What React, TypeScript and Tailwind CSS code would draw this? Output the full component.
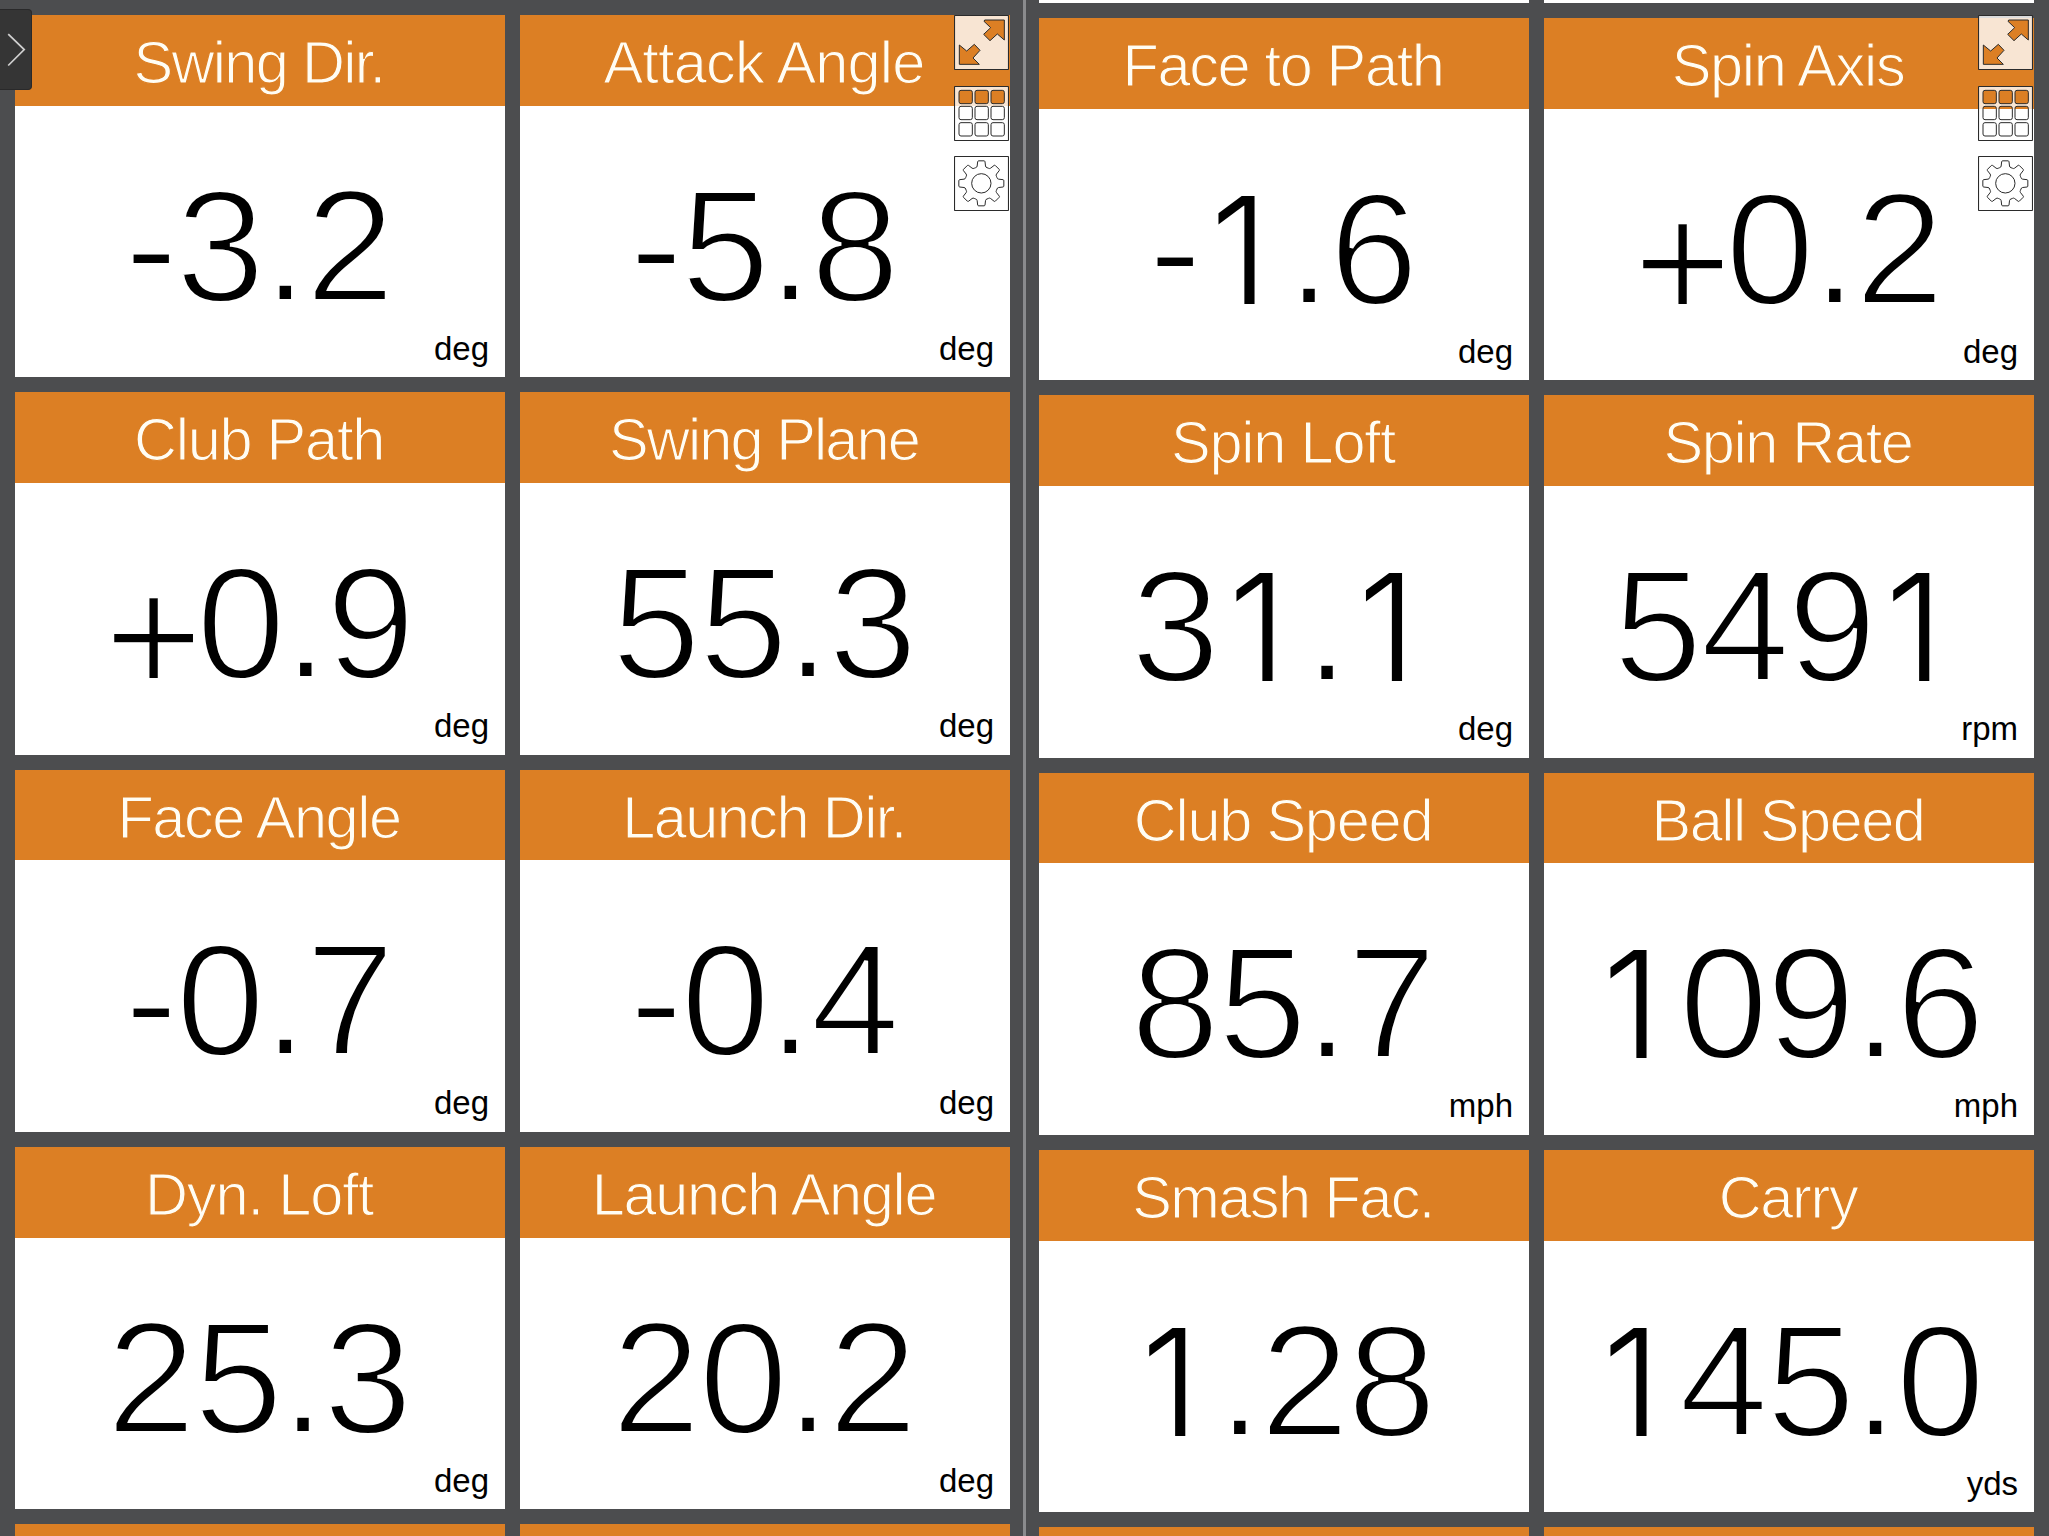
interface Metric {
  title: string;
  value: string;
  unit?: string;
  tracking?: string;
}

const leftMetrics: Metric[] = [
  { title: 'Swing Dir.', value: '-3.2', unit: 'deg', tracking: 'tracking-[-1.7px]' },
  { title: 'Attack Angle', value: '-5.8', unit: 'deg', tracking: 'tracking-[-0.8px]' },
  { title: 'Club Path', value: '+0.9', unit: 'deg', tracking: 'tracking-[-1.25px]' },
  { title: 'Swing Plane', value: '55.3', unit: 'deg', tracking: 'tracking-[-1.9px]' },
  { title: 'Face Angle', value: '-0.7', unit: 'deg', tracking: 'tracking-[-1.45px]' },
  { title: 'Launch Dir.', value: '-0.4', unit: 'deg', tracking: 'tracking-[-1.6px]' },
  { title: 'Dyn. Loft', value: '25.3', unit: 'deg', tracking: 'tracking-[-1.1px]' },
  { title: 'Launch Angle', value: '20.2', unit: 'deg', tracking: 'tracking-[-1.35px]' },
];

const rightMetrics: Metric[] = [
  { title: 'Face to Path', value: '-1.6', unit: 'deg' },
  { title: 'Spin Axis', value: '+0.2', unit: 'deg' },
  { title: 'Spin Loft', value: '31.1', unit: 'deg', tracking: 'tracking-[-1.2px]' },
  { title: 'Spin Rate', value: '5491', unit: 'rpm' },
  { title: 'Club Speed', value: '85.7', unit: 'mph', tracking: 'tracking-[-1.25px]' },
  { title: 'Ball Speed', value: '109.6', unit: 'mph', tracking: 'tracking-[-1.5px]' },
  { title: 'Smash Fac.', value: '1.28', tracking: 'tracking-[-1.6px]' },
  { title: 'Carry', value: '145.0', unit: 'yds' },
];

// The one has no foot and the plus sits on the baseline
function Glyph({ char }: { char: string }) {
  if (char === '1') {
    return (
      <span className="inline-block w-[87px] pr-[18px] text-right font-['Inter'] text-[149px] leading-none font-light tracking-normal [-webkit-text-stroke:0px]">
        1
      </span>
    );
  }
  if (char === '+') {
    return <span className="align-[-17px] text-[170px] leading-[0] tracking-[-7px]">+</span>;
  }
  return <>{char}</>;
}

// The background-coloured stroke thins the regular weight down to a light one
function MetricCard({ title, value, unit, tracking = 'tracking-[-1.35px]' }: Metric) {
  return (
    <div className="flex h-[362.3px] flex-col bg-white">
      <div className={`flex h-[90.7px] shrink-0 justify-center bg-[#dc7f24] pt-[16px] pr-[2px] text-[59.5px] leading-[64px] whitespace-nowrap text-[#fffdf4] [-webkit-text-stroke:1.2px_#dc7f24] ${tracking}`}>
        {title}
      </div>
      <div className="flex h-[212px] shrink-0 justify-center pt-[60px] pr-[3px] text-[160.5px] leading-[160px] tracking-[-2.1px] whitespace-nowrap text-black [-webkit-text-stroke:3.8px_white]">
        <span>
          {value.split('').map((char, i) => (
            <Glyph key={i} char={char} />
          ))}
        </span>
      </div>
      <div className="pt-[11px] pr-[16px] text-right text-[33px] leading-[40px] text-black">{unit}</div>
    </div>
  );
}

const FRAME =
  'M4 1.5H161Q163.5 1.5 163.5 4V161Q163.5 163.5 161 163.5H4Q1.5 163.5 1.5 161V4Q1.5 1.5 4 1.5Z';

// Translucent tile with the icon cut out, so the card shows through it
function ToolButton({ cutout }: { cutout: string }) {
  return (
    <button className="block h-[55px] w-[55px]">
      <svg viewBox="0 0 165 165" className="h-full w-full" fill="none" stroke="#2b2b2b" strokeWidth="3" strokeLinejoin="round">
        <path d={FRAME + cutout} fill="#fff" fillOpacity="0.8" fillRule="evenodd" stroke="none" />
        <path d={FRAME} strokeWidth="3.4" />
        <path d={cutout} />
      </svg>
    </button>
  );
}

const ARROWS =
  'M92 15H151V75L130 57L108 77L89 58L110 38L90 19Z' +
  'M16 90L38 108L61 88L78 106L57 129L76 148H16Z';

const GRID = [13, 61, 110]
  .flatMap((y) => [15, 63, 111].map((x) => `M${x + 6} ${y}h28q6 0 6 6v28q0 6 -6 6h-28q-6 0 -6 -6v-28q0 -6 6 -6Z`))
  .join('');

// Eight teeth around (82, 82)
function gearPath() {
  const parts: string[] = [];
  for (let i = 0; i < 8; i++) {
    const a = (i * Math.PI) / 4;
    const p = (x: number, y: number) =>
      `${(82 + x * Math.cos(a) - y * Math.sin(a)).toFixed(1)} ${(82 + x * Math.sin(a) + y * Math.cos(a)).toFixed(1)}`;
    parts.push(
      `${i ? 'L' : 'M'}${p(-17, -47)}Q${p(-13, -48)} ${p(-12.5, -52)}L${p(-11, -65)}Q${p(-10.5, -67.5)} ${p(-8, -67.5)}` +
        `L${p(8, -67.5)}Q${p(10.5, -67.5)} ${p(11, -65)}L${p(12.5, -52)}Q${p(13, -48)} ${p(17, -47)}`
    );
  }
  return parts.join('') + 'ZM111 82A29 29 0 1 1 53 82A29 29 0 1 1 111 82Z';
}

const GEAR = gearPath();

function Toolbar() {
  return (
    <div className="flex flex-col gap-[15.5px]">
      <ToolButton cutout={ARROWS} />
      <ToolButton cutout={GRID} />
      <ToolButton cutout={GEAR} />
    </div>
  );
}

export default function App() {
  return (
    <div className="relative flex h-[1536px] w-[2049px] overflow-hidden bg-[#4c4d4f] font-['Liberation_Sans',Arial,sans-serif]">
      <section className="relative h-full w-[1023px] shrink-0 overflow-hidden pt-[15px] pl-[15px]">
        <div className="grid grid-cols-[490px_490px] gap-[15px]">
          {leftMetrics.map((m) => (
            <MetricCard key={m.title} {...m} />
          ))}
          <div className="h-5 bg-[#dc7f24]" />
          <div className="h-5 bg-[#dc7f24]" />
        </div>
        <div className="absolute top-[15.4px] right-[14px]">
          <Toolbar />
        </div>
      </section>

      <div className="h-full w-[3px] shrink-0 bg-[#8a8b8d]" />

      <section className="relative h-full w-[1023px] shrink-0 overflow-hidden pl-[13px]">
        <div className="grid grid-cols-[490px_490px] gap-[15px]">
          <div className="h-[3px] bg-white" />
          <div className="h-[3px] bg-white" />
          {rightMetrics.map((m) => (
            <MetricCard key={m.title} {...m} />
          ))}
          <div className="h-5 bg-[#dc7f24]" />
          <div className="h-5 bg-[#dc7f24]" />
        </div>
        <div className="absolute top-[15.4px] right-[16px]">
          <Toolbar />
        </div>
      </section>

      {/* Drawer handle */}
      <button className="absolute top-[9px] left-0 flex h-[81px] w-8 items-center rounded-r-[4px] border border-l-0 border-[#29292a] bg-[#353535]">
        <svg viewBox="0 0 32 40" className="h-10 w-8" fill="none" stroke="#d0d0d0" strokeWidth="1.8">
          <path d="M8.5 3.5L25 19.5L8.5 36" />
        </svg>
      </button>
    </div>
  );
}
